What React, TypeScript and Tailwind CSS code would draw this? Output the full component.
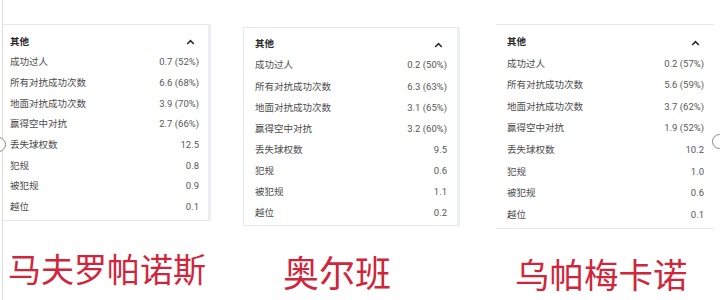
import React from "react";

type Row = [string, string];

const d1: Row[] = [
  ["成功过人", "0.7 (52%)"],
  ["所有对抗成功次数", "6.6 (68%)"],
  ["地面对抗成功次数", "3.9 (70%)"],
  ["赢得空中对抗", "2.7 (66%)"],
  ["丢失球权数", "12.5"],
  ["犯规", "0.8"],
  ["被犯规", "0.9"],
  ["越位", "0.1"],
];
const d2: Row[] = [
  ["成功过人", "0.2 (50%)"],
  ["所有对抗成功次数", "6.3 (63%)"],
  ["地面对抗成功次数", "3.1 (65%)"],
  ["赢得空中对抗", "3.2 (60%)"],
  ["丢失球权数", "9.5"],
  ["犯规", "0.6"],
  ["被犯规", "1.1"],
  ["越位", "0.2"],
];
const d3: Row[] = [
  ["成功过人", "0.2 (57%)"],
  ["所有对抗成功次数", "5.6 (59%)"],
  ["地面对抗成功次数", "3.7 (62%)"],
  ["赢得空中对抗", "1.9 (52%)"],
  ["丢失球权数", "10.2"],
  ["犯规", "1.0"],
  ["被犯规", "0.6"],
  ["越位", "0.1"],
];

const font = { fontFamily: 'Roboto, "Noto Sans CJK SC", sans-serif' };

function Chevron() {
  return (
    <svg width="9" height="6" viewBox="0 0 9 6" className="block">
      <polyline points="1.2,5 4.5,1.7 7.8,5" fill="none" stroke="#2a2a2a" strokeWidth="1.6" />
    </svg>
  );
}

function Table({ rows, rowH, headH }: { rows: Row[]; rowH: string; headH: string }) {
  return (
    <>
      <div className={`flex items-center justify-between ${headH}`}>
        <span className="text-[9.5px] font-bold text-[#2a2a2a]">其他</span>
        <span className="mr-[4px]"><Chevron /></span>
      </div>
      {rows.map(([k, v]) => (
        <div key={k} className={`flex items-center justify-between ${rowH}`}>
          <span className="text-[9.5px] text-[#4d4d4d]">{k}</span>
          <span className="text-[9.5px] text-[#585858]">{v}</span>
        </div>
      ))}
    </>
  );
}

export default function App() {
  return (
    <div className="relative w-[720px] h-[300px] bg-white overflow-hidden flex" style={font}>
      {/* Column 1 */}
      <div className="w-[241px] ml-[2px] border-l border-[#dcdcdc] flex flex-col">
        <div className="mt-[24px] w-[208px] border-t border-b border-[#e6e8eb] border-r-[3px] border-r-[#eceef1] pl-[7px] pr-[9px] pb-[2px]">
          <div className="pt-[7px]">
            <Table rows={d1} rowH="h-[20.7px]" headH="h-[20px]" />
          </div>
        </div>
        <div className="mt-[33px] ml-[5px] text-[33px] leading-none text-[#d0263c]">马夫罗帕诺斯</div>
      </div>
      {/* Column 2 */}
      <div className="w-[253px] flex flex-col">
        <div className="mt-[27px] w-[217px] border border-[#e6e8eb] border-r-[3px] border-r-[#eceef1] pl-[11px] pr-[10px] pb-[1px]">
          <div className="pt-[6px]">
            <Table rows={d2} rowH="h-[21.1px]" headH="h-[21px]" />
          </div>
        </div>
        <div className="mt-[31px] ml-[40px] text-[36px] leading-none text-[#d0263c]">奥尔班</div>
      </div>
      {/* Column 3 */}
      <div className="w-[224px] flex flex-col">
        <div className="mt-[24px] w-[218px] border-t border-b border-[#e6e8eb] pl-[11px] pr-[10px] pb-[2px]">
          <div className="pt-[7px]">
            <Table rows={d3} rowH="h-[21.6px]" headH="h-[21px]" />
          </div>
        </div>
        <div className="mt-[30px] ml-[19px] text-[34.5px] leading-none text-[#d0263c]">乌帕梅卡诺</div>
      </div>

      <div className="absolute left-[-9px] top-[137px] w-[15px] h-[15px] rounded-full border border-[#888] bg-white" />
      <div className="absolute left-[712px] top-[134px] w-[15px] h-[15px] rounded-full border border-[#888] bg-white" />
    </div>
  );
}
